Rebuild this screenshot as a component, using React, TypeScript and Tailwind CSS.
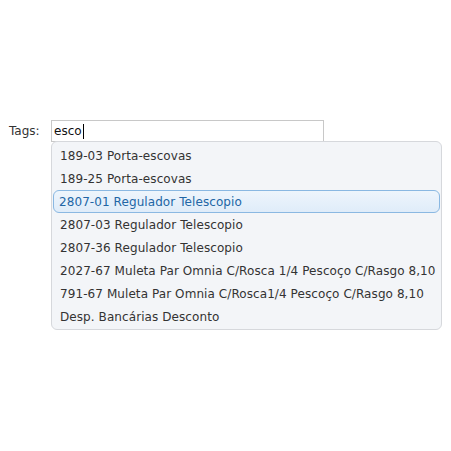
import React from "react";

const items = [
  "189-03 Porta-escovas",
  "189-25 Porta-escovas",
  "2807-01 Regulador Telescopio",
  "2807-03 Regulador Telescopio",
  "2807-36 Regulador Telescopio",
  "2027-67 Muleta Par Omnia C/Rosca 1/4 Pescoço C/Rasgo 8,10",
  "791-67 Muleta Par Omnia C/Rosca1/4 Pescoço C/Rasgo 8,10",
  "Desp. Bancárias Desconto",
];

export default function App() {
  return (
    <div
      className="w-[451px] h-[451px] bg-white text-[#333] text-[12px] leading-none"
      style={{ fontFamily: '"DejaVu Sans", "Liberation Sans", sans-serif' }}
    >
      <div className="pt-[120px] flex items-start">
        <div className="w-[51px] pl-[9px] h-[21px] flex items-center text-[#333]">Tags:</div>
        <div className="flex flex-col">
          <div className="w-[273px] h-[22px] border border-[#c8c8c8] bg-white flex items-center pl-[2px] text-[#111]">
            <span>esco</span>
            <span className="w-px h-[15px] bg-black ml-px" />
          </div>
          <div className="w-[391px] h-[189px] -mt-px ml-0 border border-[#d6d8dc] rounded-[6px] bg-[#f3f5f8] pt-[2px] px-[1px] flex flex-col tracking-[0.08px]">
            {items.map((t, i) => (
              <div
                key={i}
                className={
                  i === 2
                    ? "h-[23px] flex items-center pl-[5px] rounded-[6px] border border-[#8ab8e2] bg-gradient-to-b from-[#eef5fc] to-[#dfecf9] text-[#2266a5]"
                    : "h-[23px] flex items-center pl-[6px] border border-transparent"
                }
              >
                {t}
              </div>
            ))}
          </div>
        </div>
      </div>
    </div>
  );
}
